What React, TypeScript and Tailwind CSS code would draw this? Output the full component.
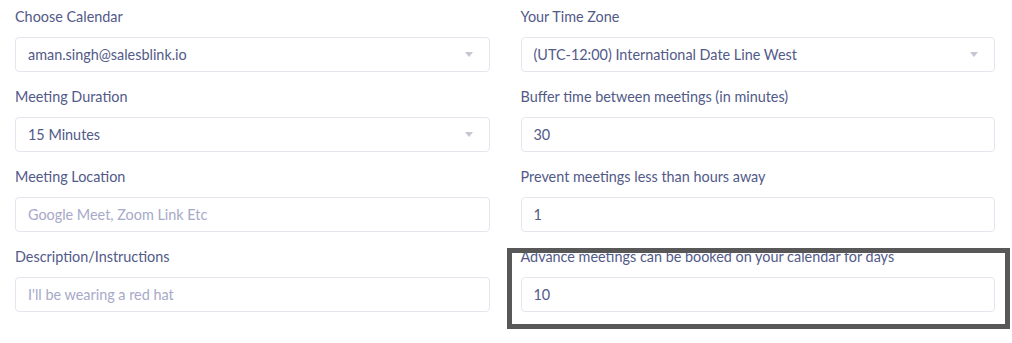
import React from 'react';

interface Field {
  label: string;
  value?: string;
  placeholder?: string;
  select?: boolean;
}

const leftFields: Field[] = [
  { label: 'Choose Calendar', value: 'aman.singh@salesblink.io', select: true },
  { label: 'Meeting Duration', value: '15 Minutes', select: true },
  { label: 'Meeting Location', placeholder: 'Google Meet, Zoom Link Etc' },
  { label: 'Description/Instructions', placeholder: "I'll be wearing a red hat" },
];

const rightFields: Field[] = [
  { label: 'Your Time Zone', value: '(UTC-12:00) International Date Line West', select: true },
  { label: 'Buffer time between meetings (in minutes)', value: '30' },
  { label: 'Prevent meetings less than hours away', value: '1' },
  { label: 'Advance meetings can be booked on your calendar for days', value: '10' },
];

const FormField: React.FC<{ field: Field }> = ({ field }) => (
  <div className="flex flex-col">
    <label className="h-[20px] leading-[20px] text-[14.4px] text-[#525a88] mb-[10px]">{field.label}</label>
    <div className="h-[35px] flex items-center justify-between rounded-[4px] border border-[#e3e6ef] bg-white pl-[12px] pr-[16px] text-[14.4px]">
      {field.value ? (
        <span className="text-[#525a88]">{field.value}</span>
      ) : (
        <span className="text-[#a7a9c8]">{field.placeholder}</span>
      )}
      {field.select && (
        <svg width="8" height="5" viewBox="0 0 8 5" className="shrink-0">
          <path d="M0 0h8L4 5z" fill="#c4c6d2" />
        </svg>
      )}
    </div>
  </div>
);

export default function App() {
  return (
    <div
      className="relative w-[1012px] h-[343px] bg-white overflow-hidden"
      style={{ fontFamily: 'Lato, "Noto Sans", sans-serif' }}
    >
      <div className="grid grid-cols-2 gap-x-[31px] pl-[15px] pr-[17px] pt-[7px]">
        <div className="flex flex-col gap-y-[15px]">
          {leftFields.map((f) => (
            <FormField key={f.label} field={f} />
          ))}
        </div>
        <div className="flex flex-col gap-y-[15px]">
          {rightFields.map((f) => (
            <FormField key={f.label} field={f} />
          ))}
        </div>
      </div>

      {/* highlight annotation */}
      <div className="absolute left-[507px] top-[248px] w-[503px] h-[81px] border-[5px] border-[#585858] pointer-events-none" />
    </div>
  );
}
